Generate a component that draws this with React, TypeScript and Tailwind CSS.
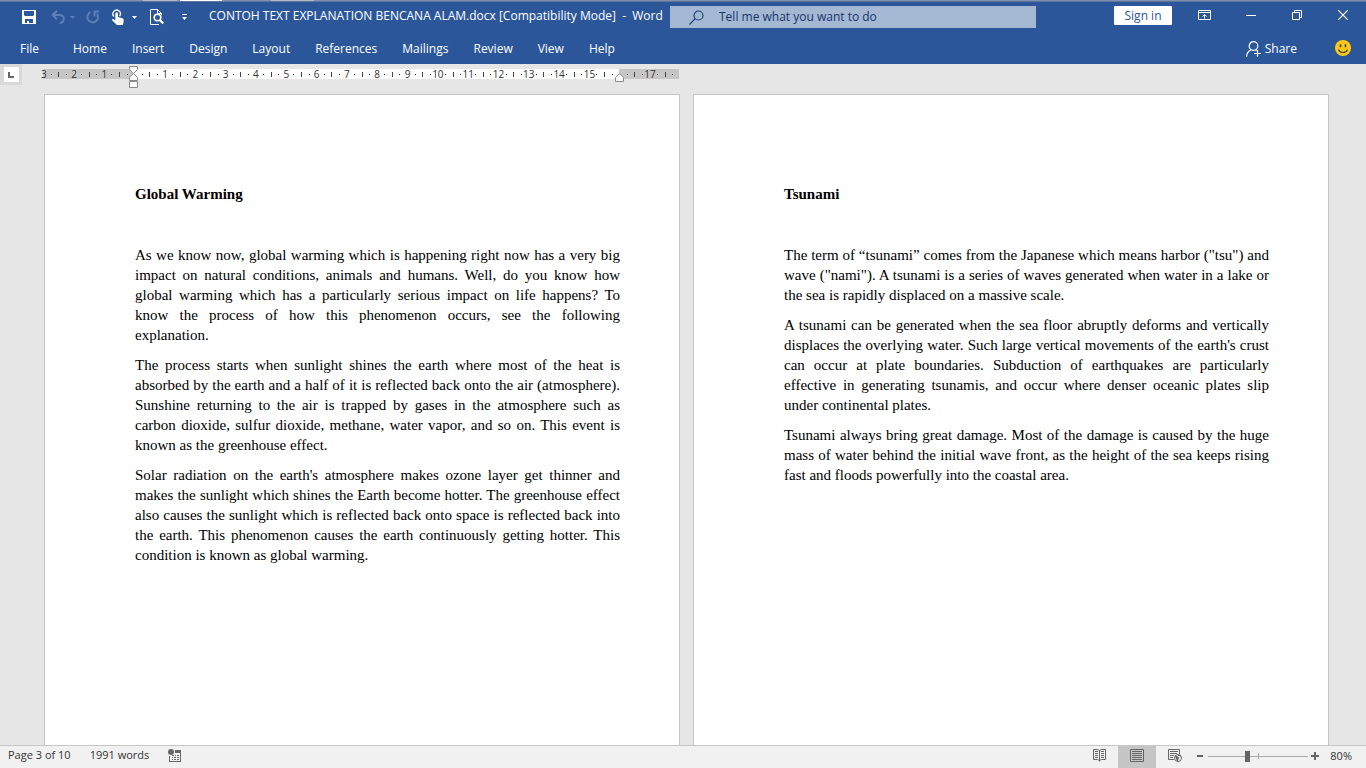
import type { ReactNode } from "react";

const tabs = [
  "Home",
  "Insert",
  "Design",
  "Layout",
  "References",
  "Mailings",
  "Review",
  "View",
  "Help",
];

const globalWarming = [
  "As we know now, global warming which is happening right now has a very big impact on natural conditions, animals and humans. Well, do you know how global warming which has a particularly serious impact on life happens? To know the process of how this phenomenon occurs, see the following explanation.",
  "The process starts when sunlight shines the earth where most of the heat is absorbed by the earth and a half of it is reflected back onto the air (atmosphere). Sunshine returning to the air is trapped by gases in the atmosphere such as carbon dioxide, sulfur dioxide, methane, water vapor, and so on. This event is known as the greenhouse effect.",
  "Solar radiation on the earth's atmosphere makes ozone layer get thinner and makes the sunlight which shines the Earth become hotter. The greenhouse effect also causes the sunlight which is reflected back onto space is reflected back into the earth. This phenomenon causes the earth continuously getting hotter. This condition is known as global warming.",
];

const tsunami = [
  "The term of “tsunami” comes from the Japanese which means harbor (\"tsu\") and wave (\"nami\"). A tsunami is a series of waves generated when water in a lake or the sea is rapidly displaced on a massive scale.",
  "A tsunami can be generated when the sea floor abruptly deforms and vertically displaces the overlying water. Such large vertical movements of the earth's crust can occur at plate boundaries. Subduction of earthquakes are particularly effective in generating tsunamis, and occur where denser oceanic plates slip under continental plates.",
  "Tsunami always bring great damage. Most of the damage is caused by the huge mass of water behind the initial wave front, as the height of the sea keeps rising fast and floods powerfully into the coastal area.",
];

function Caret() {
  return (
    <svg width="5" height="3" viewBox="0 0 5 3">
      <path d="M0 0h5L2.5 3z" fill="currentColor" />
    </svg>
  );
}

function QuickAccess() {
  return (
    <div className="flex h-full shrink-0 items-center pl-[13px]">
      <button aria-label="Save" className="flex w-8 justify-center">
        <svg width="14" height="14" viewBox="0 0 14 14">
          <path
            fillRule="evenodd"
            fill="#fff"
            d="M0 0h14v14H0zM2 1v4l1 1h8l1-1V1zM3 9v4h2v-2h2v2h4V9z"
          />
        </svg>
      </button>
      <button
        aria-label="Undo"
        className="flex w-9 items-center justify-center gap-1 text-[#5b7fb8]"
      >
        <svg width="15" height="14" viewBox="0 0 15 14" fill="none" stroke="currentColor" strokeWidth="2">
          <path d="M6 0.700L1.700 5 6 9.300M2 5h6.500c6 0 5.500 7.500 0 8" />
        </svg>
        <Caret />
      </button>
      <button aria-label="Redo" className="flex w-6 justify-center text-[#5b7fb8]">
        <svg width="14" height="14" viewBox="0 0 14 14" fill="none" stroke="currentColor" strokeWidth="2">
          <path d="M4.500 2.200A5.300 5.300 0 1 0 11 4M8.500 6.500V1.500H13" />
        </svg>
      </button>
      <button
        aria-label="Touch/Mouse Mode"
        className="flex w-[39px] items-center justify-center gap-2 text-white"
      >
        <svg width="12" height="16" viewBox="0 0 12 16">
          <path
            d="M2 7.500a3.700 3.700 0 1 1 5.500-.3"
            fill="none"
            stroke="#fff"
            strokeWidth="1.300"
          />
          <path
            fill="#fff"
            d="M3.300 4.500c0-1.500 2.700-1.500 2.700 0V8l4.300 1.200c1 .3 1.500 1 1.400 2L11 16H5L.3 11.600c-.7-.9.500-1.900 1.400-1.300l1.600 1z"
          />
        </svg>
        <Caret />
      </button>
      <button aria-label="Print Preview" className="flex w-[26px] justify-center">
        <svg width="14" height="16" viewBox="0 0 14 16" fill="none" stroke="#fff">
          <path d="M9 15.500H.5V.5h7l4 4V6M7.500.5v4h4" />
          <circle cx="7.500" cy="8.500" r="3.300" strokeWidth="1.600" />
          <path d="M9.800 11l3.500 3.500" strokeWidth="2.200" />
        </svg>
      </button>
      <button aria-label="Customize Quick Access Toolbar" className="flex w-7 justify-center">
        <svg width="5" height="6" viewBox="0 0 5 6" fill="#fff">
          <path d="M0 0h5v1H0zM0 3h5L2.500 6z" />
        </svg>
      </button>
    </div>
  );
}

function WindowButton({ label, children }: { label: string; children: ReactNode }) {
  return (
    <button aria-label={label} className="flex h-[26px] w-[46px] items-center justify-center">
      {children}
    </button>
  );
}

function TitleBar() {
  return (
    <div className="flex h-[30px] items-center">
      <QuickAccess />
      <h1 className="w-[472px] shrink-0 pb-0.5 pl-[11px] text-xs whitespace-pre">
        CONTOH TEXT EXPLANATION BENCANA ALAM.docx [Compatibility Mode]  -  Word
      </h1>
      <label className="flex h-[22px] w-[366px] items-center gap-[15px] bg-[#a4b8d3] pl-[19px]">
        <svg width="15" height="15" viewBox="0 0 15 15" fill="none" stroke="#1f3f77" strokeWidth="1.200">
          <circle cx="9.500" cy="5.500" r="4.500" />
          <path d="M6.200 8.700L.5 14.500" />
        </svg>
        <input
          aria-label="Tell me what you want to do"
          placeholder="Tell me what you want to do"
          className="min-w-0 flex-1 bg-transparent text-xs outline-none placeholder:text-[#17356b]"
        />
      </label>
      <div className="ml-auto flex h-full items-start">
        <button className="mt-1 mr-[10px] h-[19px] w-[58px] rounded-[1px] bg-white text-xs leading-[18px] text-[#2b579a]">
          Sign in
        </button>
        <WindowButton label="Ribbon Display Options">
          <svg width="14" height="10" viewBox="0 0 14 10" fill="none" stroke="#fff">
            <path d="M.5.5h12v9H.5zM.5 2.500h12M6.500 8.500v-4M4.500 6.500l2-2 2 2" />
          </svg>
        </WindowButton>
        <WindowButton label="Minimize">
          <svg width="10" height="1" viewBox="0 0 10 1">
            <path d="M0 0h10v1H0z" fill="#fff" />
          </svg>
        </WindowButton>
        <WindowButton label="Restore Down">
          <svg width="10" height="10" viewBox="0 0 10 10" fill="none" stroke="#fff">
            <path d="M.5 2.500h7v7h-7zM2.500 2.500v-2h7v7h-2" />
          </svg>
        </WindowButton>
        <WindowButton label="Close">
          <svg width="10" height="10" viewBox="0 0 10 10" fill="none" stroke="#fff" strokeWidth="1.200">
            <path d="M0 0l10 10M10 0L0 10" />
          </svg>
        </WindowButton>
      </div>
    </div>
  );
}

function RibbonTabs() {
  return (
    <nav className="flex h-8 items-center pt-0.5 pr-[15px] pl-5 text-xs">
      <button className="mr-[34px]">File</button>
      <div className="flex gap-[25px]">
        {tabs.map((tab) => (
          <button key={tab}>{tab}</button>
        ))}
      </div>
      <button className="ml-auto flex items-center gap-1">
        <svg width="15" height="16" viewBox="0 0 15 16" fill="none" stroke="#fff" strokeWidth="1.200">
          <circle cx="7.500" cy="5" r="4.300" />
          <path d="M.6 16c0-3.500 1.900-6 4.400-7M9.500 9l1 .8M11.500 9v7M8 12.500h7" />
        </svg>
        Share
      </button>
      <button aria-label="Feedback" className="ml-[38px] pb-0.5">
        <svg width="16" height="16" viewBox="0 0 16 16">
          <circle cx="8" cy="8" r="8" fill="#fdc912" />
          <ellipse cx="5.500" cy="5.800" rx="1" ry="1.700" fill="#4a4a3a" />
          <ellipse cx="10.500" cy="5.800" rx="1" ry="1.700" fill="#4a4a3a" />
          <path d="M3.500 9.500c1.500 4 7.500 4 9 0" fill="none" stroke="#4a4a3a" strokeWidth="1.200" />
        </svg>
      </button>
    </nav>
  );
}

// Four marks per centimetre: number, dot, half-way bar, dot.
function RulerMark({ index }: { index: number }) {
  const quarter = index % 4;
  const cm = Math.abs(index / 4 - 3);
  if (quarter === 0) {
    return cm === 0 || cm === 16 ? null : <span>{cm}</span>;
  }
  return quarter === 2 ? (
    <span className="h-[5px] w-px shrink-0 bg-[#444]" />
  ) : (
    <span className="size-px shrink-0 bg-[#222]" />
  );
}

function Ruler() {
  return (
    <div className="flex gap-[13px] pt-[5px] pr-[38px] pl-[43px]">
      <div className="relative flex h-[10px] flex-1">
        <div className="w-[90px] bg-[#c6c6c6]" />
        <div className="flex-1 bg-white" />
        <div className="w-[60px] bg-[#c6c6c6]" />
        <div className="absolute inset-y-0 -left-[3px] flex w-full text-[10px] leading-none text-[#333]">
          {Array.from({ length: 84 }, (_, i) => (
            <span key={i} className="flex flex-1 items-center justify-center">
              <span className="flex w-0 items-center justify-center">
                <RulerMark index={i} />
              </span>
            </span>
          ))}
        </div>
        <svg
          className="absolute -top-[3px] left-[86px]"
          width="9"
          height="22"
          viewBox="0 0 9 22"
          fill="#fff"
          stroke="#8a8a8a"
        >
          <path d="M.5.5h8v3l-4 4-4-4zM.5 14.500v-3l4-4 4 4v3zM.5 15.500h8v6h-8z" />
        </svg>
        <svg
          className="absolute top-[4px] right-[55px]"
          width="9"
          height="9"
          viewBox="0 0 9 9"
          fill="#fff"
          stroke="#8a8a8a"
        >
          <path d="M.5 8.500v-4l4-4 4 4v4z" />
        </svg>
      </div>
      <div className="flex-1" />
    </div>
  );
}

function Page({ title, paragraphs }: { title: string; paragraphs: string[] }) {
  return (
    <article className="min-h-[900px] flex-1 border border-[#c6c6c6] bg-white pt-[89px] pr-[59px] pl-[90px] font-['Liberation_Serif',serif] text-[15px] leading-5 text-black">
      <h2 className="mb-[41px] font-bold">{title}</h2>
      {paragraphs.map((text) => (
        <p key={text} className="mb-[10px] text-justify">
          {text}
        </p>
      ))}
    </article>
  );
}

function ViewButton({
  label,
  active,
  children,
}: {
  label: string;
  active?: boolean;
  children: ReactNode;
}) {
  return (
    <button
      aria-label={label}
      className={`flex h-full w-[38px] items-center justify-center pb-[3px] ${active ? "bg-[#c5c5c5]" : ""}`}
    >
      {children}
    </button>
  );
}

function StatusBar() {
  return (
    <footer className="flex h-[23px] shrink-0 items-center border-t border-[#c6c6c6] bg-[#f1f1f1] pr-[14px] pl-2 text-[11px] text-[#333]">
      <div className="flex items-center gap-[19px] pb-[3px]">
        <button>Page 3 of 10</button>
        <button>1991 words</button>
        <button aria-label="Macro Recording">
          <svg width="13" height="13" viewBox="0 0 13 13" fill="#666">
            <circle cx="3" cy="3" r="3" />
            <path d="M7 1h6v3H7zM1 7h1v5h10V4h1v9H1zM4 6h2v1H4zM7 6h1v1H7zM9 6h2v1H9zM4 8h1v1H4zM6 8h2v1H6zM9 8h2v1H9zM4 10h1v1H4zM6 10h2v1H6zM9 10h2v1H9z" />
          </svg>
        </button>
      </div>
      <div className="ml-auto flex h-full">
        <ViewButton label="Read Mode">
          <svg width="13" height="13" viewBox="0 0 13 13" fill="none" stroke="#666">
            <path d="M6.500 1.500v11M.5.5h4l2 1 2-1h4v10h-4l-2 1-2-1h-4zM2 2.500h3M2 4.500h3M2 6.500h3M2 8.500h3M8 2.500h3M8 4.500h3M8 6.500h3M8 8.500h3" />
          </svg>
        </ViewButton>
        <ViewButton label="Print Layout" active>
          <svg width="14" height="13" viewBox="0 0 14 13" fill="none" stroke="#666">
            <path d="M.5.5h13v12H.5zM2 2.500h10M2 4.500h10M2 6.500h10M2 8.500h10M2 10.500h10" />
          </svg>
        </ViewButton>
        <ViewButton label="Web Layout">
          <svg width="14" height="13" viewBox="0 0 14 13" fill="none" stroke="#666">
            <path d="M6 10.500H.5V.5h11V5M2 2.500h8M2 4.500h7M2 6.500h4M2 8.500h3" />
            <circle cx="10" cy="9" r="3.500" />
            <path d="M7.500 7l3 1.500-1 3.500zM10 6l2.500 1z" fill="#666" />
          </svg>
        </ViewButton>
      </div>
      <div className="flex h-full items-center pb-[2px]">
        <button aria-label="Zoom Out" className="flex w-[12px] justify-center">
          <svg width="6" height="2" viewBox="0 0 6 2">
            <path d="M0 0h6v2H0z" fill="#666" />
          </svg>
        </button>
        <div className="relative flex h-full w-[104px] items-center justify-center">
          <span className="absolute top-[7px] left-[52px] h-[6px] w-px bg-[#aaa]" />
          <input
            type="range"
            aria-label="Zoom"
            min={10}
            max={190}
            defaultValue={80}
            className="relative h-3 w-[100px] appearance-none bg-transparent [&::-webkit-slider-runnable-track]:h-px [&::-webkit-slider-runnable-track]:bg-[#aaa] [&::-webkit-slider-thumb]:-mt-[5px] [&::-webkit-slider-thumb]:h-[11px] [&::-webkit-slider-thumb]:w-[5px] [&::-webkit-slider-thumb]:appearance-none [&::-webkit-slider-thumb]:bg-[#666]"
          />
        </div>
        <button aria-label="Zoom In" className="flex w-[10px] justify-center">
          <svg width="8" height="8" viewBox="0 0 8 8">
            <path d="M3 0h2v3h3v2H5v3H3V5H0V3h3z" fill="#666" />
          </svg>
        </button>
        <button className="ml-[10px]">80%</button>
      </div>
    </footer>
  );
}

export default function App() {
  return (
    <div className="flex h-screen flex-col overflow-hidden bg-[#e6e6e6] font-['Open_Sans','Noto_Sans',sans-serif]">
      <header className="shrink-0 bg-[#2b579a] text-white">
        <div className="flex h-[2px] border-b border-[#5f7599] bg-[#7f8fae]">
          <span className="ml-[143px] w-[34px] bg-[#b3b9c6]" />
          <span className="ml-[3px] w-[42px] bg-white" />
          <span className="ml-[49px] w-[43px] bg-[#b3b9c6]" />
        </div>
        <TitleBar />
        <RibbonTabs />
      </header>
      <div className="relative h-[30px] shrink-0">
        <button
          aria-label="Tab selector"
          className="absolute top-0 left-0 flex h-[21px] w-[22px] items-center justify-center bg-[#d9d9d9]"
        >
          <span className="flex size-[15px] items-center justify-center bg-white">
            <span className="size-[6px] border-b-2 border-l-2 border-[#666]" />
          </span>
        </button>
        <Ruler />
      </div>
      <main className="flex min-h-0 flex-1 items-start gap-[13px] overflow-hidden pr-[37px] pl-11">
        <Page title="Global Warming" paragraphs={globalWarming} />
        <Page title="Tsunami" paragraphs={tsunami} />
      </main>
      <StatusBar />
    </div>
  );
}
